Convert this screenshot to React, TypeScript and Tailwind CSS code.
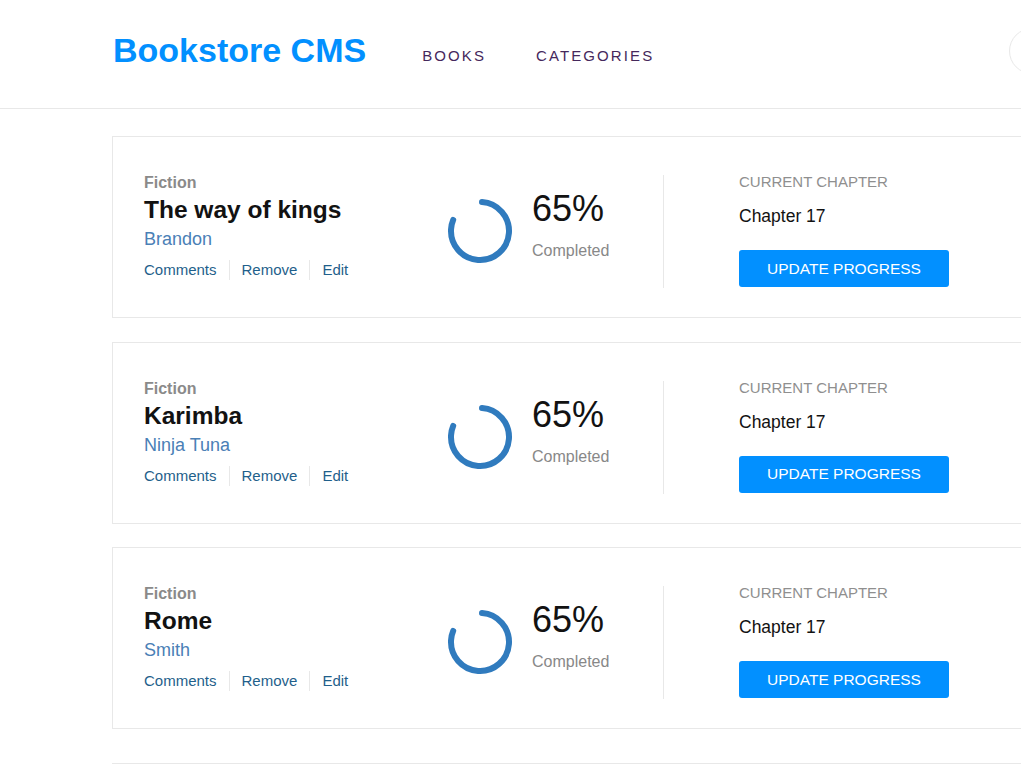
import React from 'react';

interface Book {
  id: number;
  category: string;
  title: string;
  author: string;
  progress: number;
  chapter: string;
}

const books: Book[] = [
  { id: 1, category: 'Fiction', title: 'The way of kings', author: 'Brandon', progress: 65, chapter: 'Chapter 17' },
  { id: 2, category: 'Fiction', title: 'Karimba', author: 'Ninja Tuna', progress: 65, chapter: 'Chapter 17' },
  { id: 3, category: 'Fiction', title: 'Rome', author: 'Smith', progress: 65, chapter: 'Chapter 17' },
];

const ProgressRing = () => {
  const r = 29;
  const c = 2 * Math.PI * r;
  const arc = c * 0.8;
  return (
    <svg width="68" height="68" viewBox="0 0 68 68" className="shrink-0">
      <circle
        cx="34"
        cy="34"
        r={r}
        fill="none"
        stroke="#307bbe"
        strokeWidth="6"
        strokeLinecap="round"
        strokeDasharray={`${arc} ${c}`}
        transform="rotate(-86 34 34)"
      />
    </svg>
  );
};

const BookCard = ({ book }: { book: Book }) => (
  <div className="flex items-start h-[182px] bg-white border border-[#e8e8e8] pl-[31px]">
    <div className="w-[302px] shrink-0 mt-[36px]">
      <div className="text-[16px] leading-[20px] font-bold text-[#8a8a8a]">{book.category}</div>
      <div className="mt-[2px] text-[24.5px] leading-[30px] font-bold text-[#121212]">{book.title}</div>
      <div className="mt-[2px] text-[18px] leading-[24px] text-[#4a80b6]">{book.author}</div>
      <ul className="mt-[9px] flex items-center text-[15px] leading-[20px] text-[#1f5f8b]">
        <li className="pr-[12px]">Comments</li>
        <li className="px-[12px] border-l border-[#e8e8e8]">Remove</li>
        <li className="pl-[12px] border-l border-[#e8e8e8]">Edit</li>
      </ul>
    </div>
    <div className="w-[217px] shrink-0 flex items-start mt-[52px]">
      <div className="mt-[8px]">
        <ProgressRing />
      </div>
      <div className="ml-[18px]">
        <div className="text-[36px] leading-[40px] text-[#121212]">{book.progress}%</div>
        <div className="mt-[12px] text-[16px] leading-[20px] text-[#888888]">Completed</div>
      </div>
    </div>
    <div className="w-px h-[113px] bg-[#e8e8e8] mt-[38px] shrink-0" />
    <div className="ml-[75px] mt-[35px]">
      <div className="text-[15px] leading-[20px] text-[#8f8f8f]">CURRENT CHAPTER</div>
      <div className="mt-[12px] text-[17.5px] leading-[24px] text-[#121212]">{book.chapter}</div>
      <button className="mt-[22px] w-[210px] h-[37px] rounded-[3px] bg-[#0290ff] text-white text-[15.5px] leading-[20px]">
        UPDATE PROGRESS
      </button>
    </div>
  </div>
);

export default function App() {
  return (
    <div className="w-full min-h-screen overflow-hidden bg-white font-['Liberation_Sans',Arial,sans-serif]">
      <div className="w-[1200px]">
        <header className="h-[109px] border-b border-[#e8e8e8] flex items-start pl-[113px] pr-[145px]">
          <h1 className="mt-[30px] text-[34px] leading-[40px] font-bold text-[#0290ff]">Bookstore CMS</h1>
          <nav className="mt-[46px] ml-[56px] flex gap-[50px] text-[15px] leading-[20px] tracking-[2.1px] text-[#45285c]">
            <a href="#">BOOKS</a>
            <a href="#">CATEGORIES</a>
          </nav>
          <div className="ml-auto mt-[28px] w-[46px] h-[46px] rounded-full border border-[#e8e8e8]" />
        </header>
        <main className="pl-[112px] pt-[27px] w-[1112px]">
          <div className="flex flex-col gap-[23.5px]">
            {books.map(book => (
              <BookCard key={book.id} book={book} />
            ))}
          </div>
          <div className="mt-[34px] border-t border-[#e8e8e8]" />
        </main>
      </div>
    </div>
  );
}
